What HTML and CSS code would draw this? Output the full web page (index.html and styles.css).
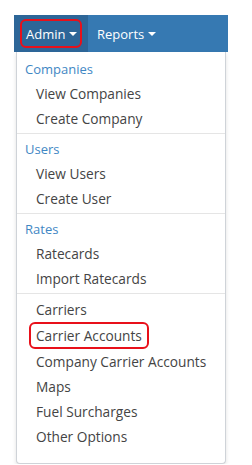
FILE: index.html
```html
<!DOCTYPE html>
<html lang="en">
<head>
    <meta charset="UTF-8">
    <meta name="viewport" content="width=device-width, initial-scale=1.0">
    <title>Admin Menu</title>
    <link rel="stylesheet" href="styles.css">
</head>
<body>
    <div class="page">
        <nav class="navbar">
            <div class="nav-item active">
                <span class="nav-link highlight">Admin <span class="caret"></span></span>
            </div>
            <div class="nav-item">
                <span class="nav-link">Reports <span class="caret"></span></span>
            </div>
        </nav>
        <ul class="dropdown-menu">
            <li class="dropdown-header">Companies</li>
            <li><a href="#">View Companies</a></li>
            <li><a href="#">Create Company</a></li>
            <li class="divider"></li>
            <li class="dropdown-header">Users</li>
            <li><a href="#">View Users</a></li>
            <li><a href="#">Create User</a></li>
            <li class="divider"></li>
            <li class="dropdown-header">Rates</li>
            <li><a href="#">Ratecards</a></li>
            <li><a href="#">Import Ratecards</a></li>
            <li class="divider"></li>
            <li><a href="#">Carriers</a></li>
            <li><a href="#" class="highlight">Carrier Accounts</a></li>
            <li><a href="#">Company Carrier Accounts</a></li>
            <li><a href="#">Maps</a></li>
            <li><a href="#">Fuel Surcharges</a></li>
            <li><a href="#">Other Options</a></li>
        </ul>
    </div>
</body>
</html>
```

FILE: styles.css
```css
body {
    margin: 0;
    padding: 0;
    background: white;
    font-family: "Open Sans", Arial, sans-serif;
}
.page {
    padding: 15px 0 0 14px;
    width: 214px;
}
.navbar {
    display: flex;
    height: 37px;
    background: #3679b2;
}
.nav-item {
    display: flex;
    align-items: center;
    padding: 0 6px;
}
.nav-item.active {
    background: #2d6698;
    width: 62px;
}
.nav-link {
    display: flex;
    align-items: center;
    color: white;
    font-size: 13px;
    height: 29px;
    padding: 0 3px;
    white-space: nowrap;
}
.caret {
    display: inline-block;
    width: 0;
    height: 0;
    margin-left: 4px;
    border-top: 4px solid white;
    border-left: 4px solid transparent;
    border-right: 4px solid transparent;
}
.nav-link.highlight {
    box-sizing: border-box;
    width: 62px;
    height: 29px;
    padding: 0 0 0 4px;
}
.highlight {
    border: 2px solid #e8101a;
    border-radius: 6px;
}
.dropdown-menu {
    list-style: none;
    margin: 0 2px;
    padding: 5px 0 14px;
    background: white;
    border: 1px solid #cfd3d8;
    border-top: none;
    border-radius: 0 0 4px 4px;
    box-shadow: 0 2px 4px rgba(0, 0, 0, 0.12);
}
.dropdown-header {
    color: #3f87c4;
    font-size: 13px;
    line-height: 24px;
    padding: 0 8px;
}
.dropdown-menu a {
    display: block;
    color: #444;
    font-size: 13.7px;
    line-height: 25px;
    padding: 0 10px 0 19px;
    text-decoration: none;
    white-space: nowrap;
}
.dropdown-menu a.highlight {
    display: inline-block;
    margin-left: 12px;
    padding: 0 5px;
    line-height: 23px;
}
.divider {
    height: 1px;
    margin: 2px 0 3px;
    background: #e5e5e5;
}
```
